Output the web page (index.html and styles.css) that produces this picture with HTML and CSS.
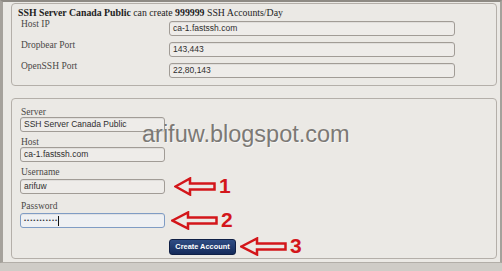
FILE: index.html
```html
<!DOCTYPE html>
<html lang="en">
<head>
    <meta charset="UTF-8">
    <title>SSH Server Canada Public</title>
    <link rel="stylesheet" href="styles.css">
</head>
<body>
    <div class="frame">
        <div class="box info-box">
            <div class="info-title"><b>SSH Server Canada Public</b> can create <b>999999</b> SSH Accounts/Day</div>
            <div class="info-row">
                <span class="info-label">Host IP</span>
                <div class="field wide">ca-1.fastssh.com</div>
            </div>
            <div class="info-row">
                <span class="info-label">Dropbear Port</span>
                <div class="field wide">143,443</div>
            </div>
            <div class="info-row">
                <span class="info-label">OpenSSH Port</span>
                <div class="field wide">22,80,143</div>
            </div>
        </div>

        <div class="box form-box">
            <div class="form-group">
                <span class="form-label">Server</span>
                <div class="field">SSH Server Canada Public</div>
            </div>
            <div class="form-group">
                <span class="form-label">Host</span>
                <div class="field">ca-1.fastssh.com</div>
            </div>
            <div class="form-group">
                <span class="form-label">Username</span>
                <div class="field-row">
                    <div class="field">arifuw</div>
                    <div class="mark mark-1">
                        <svg width="42" height="19" viewBox="0 0 42 19"><path d="M1.5 9.5 L16 1.5 V6.5 H40.5 V12.5 H16 V17.5 Z"/></svg>
                        <span class="mark-num">1</span>
                    </div>
                </div>
            </div>
            <div class="form-group">
                <span class="form-label">Password</span>
                <div class="field-row">
                    <div class="field focused"><span class="dots">•••••••••••</span><span class="caret"></span></div>
                    <div class="mark mark-2">
                        <svg width="47" height="19" viewBox="0 0 47 19"><path d="M1.5 9.5 L17 1.5 V6.5 H45.5 V12.5 H17 V17.5 Z"/></svg>
                        <span class="mark-num">2</span>
                    </div>
                </div>
            </div>
            <div class="submit-row">
                <button class="create-btn">Create Account</button>
                <div class="mark mark-3">
                    <svg width="47" height="19" viewBox="0 0 47 19"><path d="M1.5 9.5 L17 1.5 V6.5 H45.5 V12.5 H17 V17.5 Z"/></svg>
                    <span class="mark-num">3</span>
                </div>
            </div>
        </div>

        <div class="watermark">arifuw.blogspot.com</div>
    </div>
</body>
</html>
```

FILE: styles.css
```css
:root {
    --panel-bg: #ebe9e5;
    --box-line: #b4afa9;
    --field-line: #a19c96;
    --label-text: #4a4845;
    --mark-red: #d3161a;
}

body {
    margin: 0;
    background: #cfccc7;
    width: 502px;
    height: 271px;
    overflow: hidden;
}

.frame {
    position: relative;
    box-sizing: border-box;
    height: 263px;
    padding: 1px 3px 0 8px;
    background: var(--panel-bg);
    border-top: 2px solid #8e8a84;
    border-left: 3px solid #a5a19b;
    border-right: 2px solid #a5a19b;
    border-bottom: 1px solid #b2aea8;
}

/* fieldset boxes */
.box {
    border: 1px solid var(--box-line);
    border-radius: 4px;
}

.info-box {
    height: 83px;
    box-sizing: border-box;
    padding: 3px 0 0 6px;
}

.info-title {
    font-family: "Liberation Serif", serif;
    font-size: 9.8px;
    line-height: 12px;
    color: #1e1e1e;
    margin-bottom: 2px;
}

.info-row {
    display: flex;
    align-items: flex-start;
    margin-bottom: 6px;
}

.info-label {
    width: 148px;
    padding-left: 3px;
    margin-top: -2px;
    font-family: "Liberation Serif", serif;
    font-size: 9.5px;
    line-height: 11px;
    color: var(--label-text);
}

/* text fields */
.field {
    box-sizing: border-box;
    width: 145px;
    height: 15px;
    padding-left: 3px;
    border: 1px solid var(--field-line);
    border-radius: 3px;
    background: #eeece9;
    box-shadow: inset 0 1px 0 rgba(0,0,0,0.06);
    font-family: "Liberation Sans", Arial, sans-serif;
    font-size: 8.5px;
    line-height: 13px;
    color: #2e2e2e;
    white-space: nowrap;
}

.field.wide {
    width: 286px;
}

.field.focused {
    display: flex;
    align-items: center;
    border-color: #7f9cc4;
    background: #eef0f3;
}

.dots {
    font-size: 6px;
    letter-spacing: 1px;
    color: #333;
}

.caret {
    width: 1px;
    height: 10px;
    background: #111;
}

.form-box {
    margin-top: 12px;
    height: 161px;
    box-sizing: border-box;
    padding: 9px 0 0 8px;
}

.form-group {
    margin-bottom: 6px;
}

.form-label {
    display: block;
    padding-left: 1px;
    font-family: "Liberation Serif", serif;
    font-size: 9.5px;
    line-height: 9px;
    color: var(--label-text);
}

.field-row {
    display: flex;
    align-items: center;
}

/* red annotation arrows */
.mark {
    display: flex;
    align-items: center;
}

.mark svg path {
    fill: none;
    stroke: var(--mark-red);
    stroke-width: 2.5;
}

.mark-num {
    margin-left: 3px;
    margin-top: -3px;
    font-family: "Liberation Sans", Arial, sans-serif;
    font-weight: bold;
    font-size: 21px;
    line-height: 19px;
    color: var(--mark-red);
}

.mark-1 {
    margin-left: 9px;
}

.mark-2 {
    margin-left: 6px;
}

.submit-row {
    display: flex;
    align-items: center;
    margin-top: 7px;
    padding-left: 149px;
}

.create-btn {
    width: 67px;
    height: 16px;
    padding: 0;
    border: 1px solid #0f1f45;
    border-radius: 3px;
    background: linear-gradient(#2f4d84, #142a5a);
    color: #fff;
    font-family: "Liberation Sans", Arial, sans-serif;
    font-weight: bold;
    font-size: 7.4px;
}

.mark-3 {
    margin-left: 4px;
}

.watermark {
    position: absolute;
    left: 139px;
    top: 120px;
    font-family: "Liberation Sans", Arial, sans-serif;
    font-size: 23.5px;
    line-height: 24px;
    color: #7c7975;
    text-shadow: 1px 1px 0 rgba(255,255,255,0.6);
    white-space: nowrap;
}
```
